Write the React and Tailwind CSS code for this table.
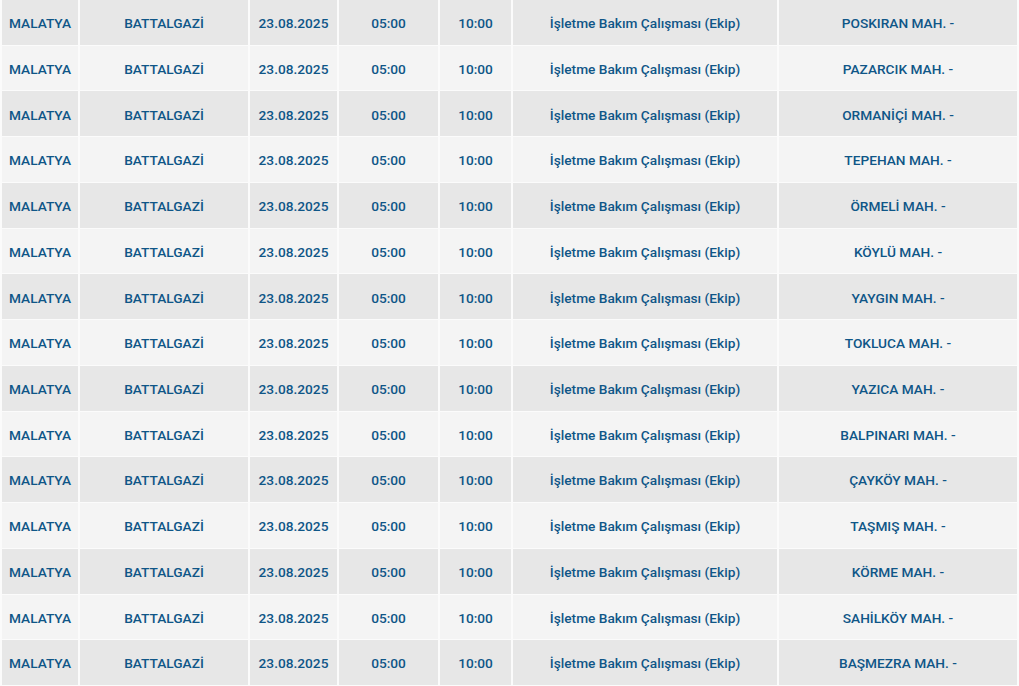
const places = [
    'POSKIRAN MAH. -',
    'PAZARCIK MAH. -',
    'ORMANİÇİ MAH. -',
    'TEPEHAN MAH. -',
    'ÖRMELİ MAH. -',
    'KÖYLÜ MAH. -',
    'YAYGIN MAH. -',
    'TOKLUCA MAH. -',
    'YAZICA MAH. -',
    'BALPINARI MAH. -',
    'ÇAYKÖY MAH. -',
    'TAŞMIŞ MAH. -',
    'KÖRME MAH. -',
    'SAHİLKÖY MAH. -',
    'BAŞMEZRA MAH. -',
];

const cellWidths = ['w-[78px]', 'w-[170px]', 'w-[89px]', 'w-[101px]', 'w-[73px]', 'w-[266px]', 'w-[242px] border-r-2'];

const Row = ({ place, index }) => {
    const cells = ['MALATYA', 'BATTALGAZİ', '23.08.2025', '05:00', '10:00', 'İşletme Bakım Çalışması (Ekip)', place];
    const bg = index % 2 === 0 ? 'bg-[#e7e7e7]' : 'bg-[#f4f4f4]';

    return (
        <div className={`flex flex-1 border-b border-[#fbfbfb] ${bg}`}>
            {cells.map((text, i) => (
                <div
                    key={i}
                    className={`${cellWidths[i]} flex shrink-0 items-center justify-center border-l-2 border-[#fbfbfb] pt-[2px]`}
                >
                    {text}
                </div>
            ))}
        </div>
    );
};

export default function App() {
    return (
        <div
            className="flex h-[686px] w-[1019px] flex-col overflow-hidden bg-[#f4f4f4] text-[13.7px] font-medium text-[#0f5687]"
            style={{ fontFamily: 'Roboto, "Liberation Sans", sans-serif' }}
        >
            {places.map((place, i) => (
                <Row key={place} place={place} index={i} />
            ))}
        </div>
    );
}
